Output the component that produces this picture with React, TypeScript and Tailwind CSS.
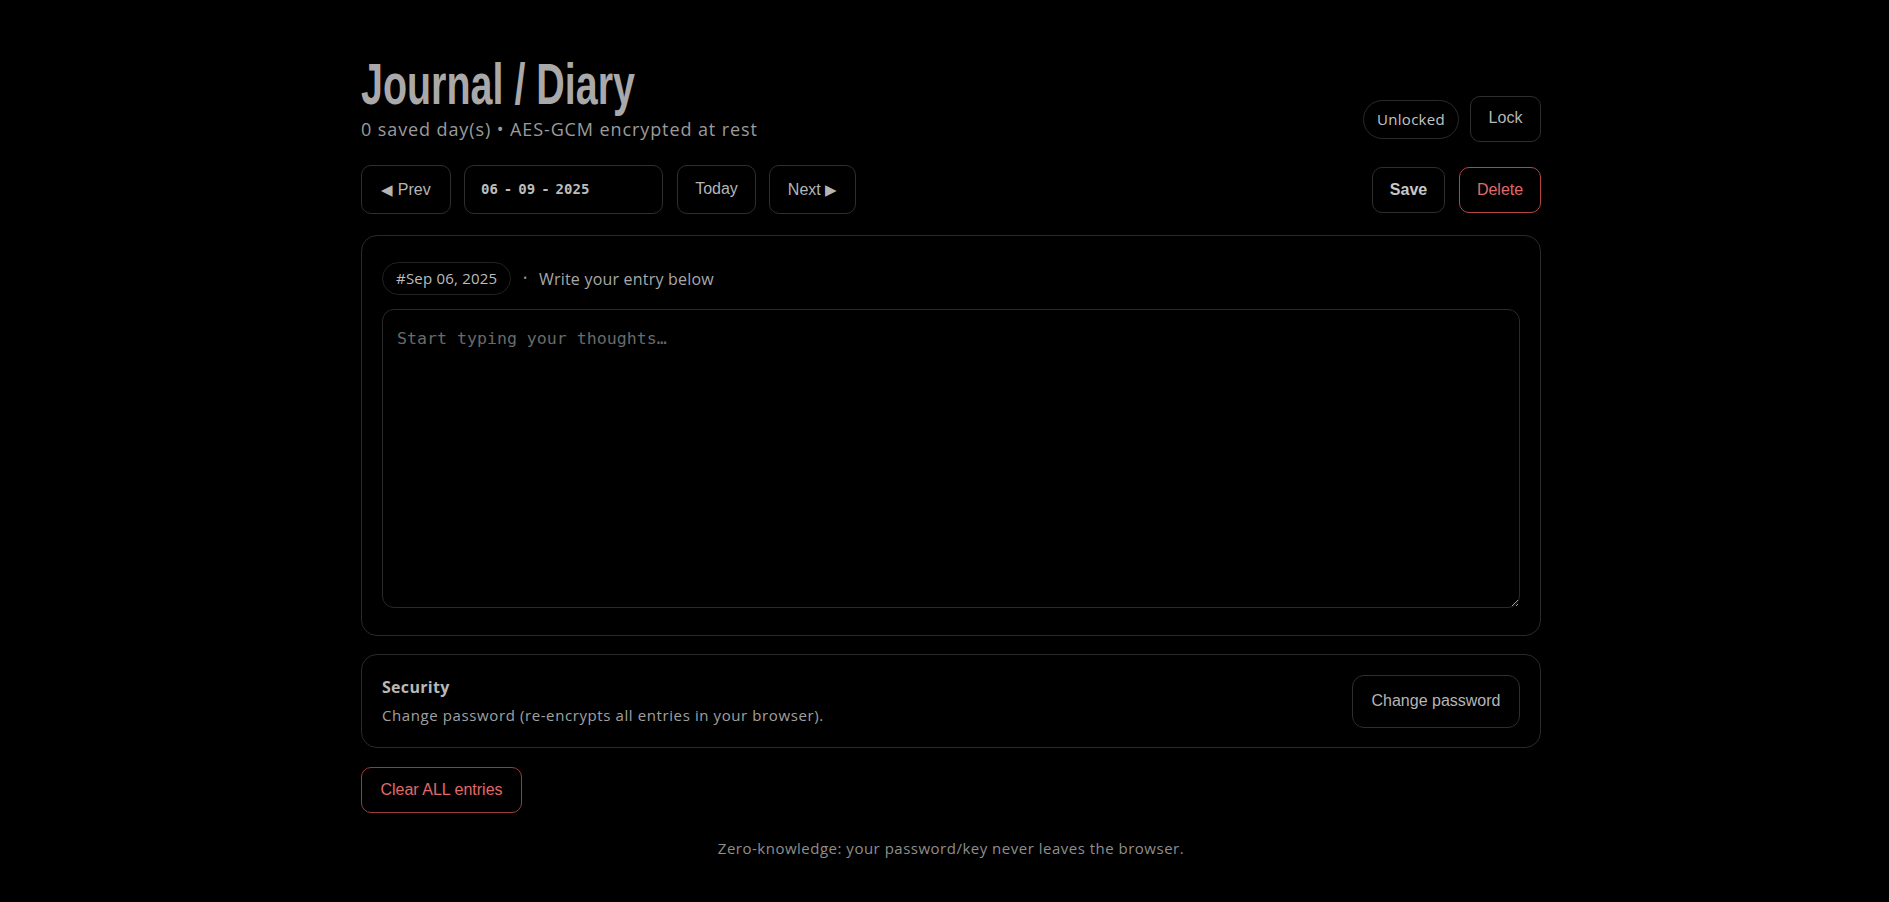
import React from "react";

const poppins = { fontFamily: '"Open Sans", "Noto Sans", sans-serif' };
const arial = { fontFamily: '"Liberation Sans", Arial, sans-serif' };

export default function App() {
  return (
    <div className="min-h-[902px] w-full bg-black text-[#aaaaaa]">
      <div className="flex justify-center pl-[13px]">
        <div className="w-[1180px] pt-[55px]">
          {/* Header */}
          <div className="flex items-end justify-between">
            <div>
              <h1
                className="inline-block origin-left scale-x-[0.68] whitespace-nowrap text-[58px] leading-[58px] font-bold text-[#a9a9a9]"
                style={arial}
              >
                Journal / Diary
              </h1>
              <p className="mt-[4px] text-[18px] leading-[24px] tracking-[0.9px] text-[#9b9b9b]" style={poppins}>
                0 saved day(s) • AES-GCM encrypted at rest
              </p>
            </div>
            <div className="flex items-center gap-[11px] mb-[-1px]" style={arial}>
              <span
                className="h-[39px] px-[13px] rounded-full border border-[#2a2a2a] flex items-center text-[15px] tracking-[0.3px] text-[#c4c4c4]"
                style={poppins}
              >
                Unlocked
              </span>
              <button className="h-[46px] w-[71px] rounded-[10px] border border-[#2e2e2e] text-[16px] text-[#b5b5b5] pb-[2px]">
                Lock
              </button>
            </div>
          </div>

          {/* Nav row */}
          <div className="mt-[24px] flex items-center justify-between" style={arial}>
            <div className="flex items-center gap-3">
              <button className="h-[49px] w-[90px] rounded-[10px] border border-[#2e2e2e] text-[16px] text-[#b5b5b5]">
                <span className="text-[15px]">◀</span> Prev
              </button>
              <div
                className="ml-[1px] h-[49px] w-[199px] rounded-[10px] border border-[#2e2e2e] flex items-center gap-[6px] pl-[16px] text-[14px] font-bold text-[#bdbdbd]"
                style={{ fontFamily: '"DejaVu Sans Mono", monospace' }}
              >
                <span>06</span>
                <span>-</span>
                <span>09</span>
                <span>-</span>
                <span>2025</span>
              </div>
              <button className="ml-[2px] h-[49px] w-[79px] rounded-[10px] border border-[#2e2e2e] text-[16px] text-[#b5b5b5] pb-[2px]">
                Today
              </button>
              <button className="ml-[1px] h-[49px] w-[87px] rounded-[10px] border border-[#2e2e2e] text-[16px] text-[#b5b5b5]">
                Next <span className="text-[15px]">▶</span>
              </button>
            </div>
            <div className="flex items-center gap-[14px]">
              <button className="h-[46px] w-[73px] rounded-[10px] border border-[#2e2e2e] text-[16px] font-bold text-[#c8c8c8]">
                Save
              </button>
              <button className="h-[46px] w-[82px] rounded-[10px] border border-[#b64646] text-[16px] text-[#e06a6a]">
                Delete
              </button>
            </div>
          </div>

          {/* Editor card */}
          <div className="mt-[21px] rounded-[16px] border border-[#2a2a2a] px-5 pt-[26px] pb-[27px]">
            <div className="flex items-center" style={poppins}>
              <span className="h-[33px] px-[13px] rounded-full border border-[#222222] flex items-center text-[15px] tracking-[0.2px] text-[#bcbcbc]">
                #Sep 06, 2025
              </span>
              <span className="ml-[12px] text-[#9a9a9a] text-[10px]">•</span>
              <span className="ml-[12px] text-[16px] tracking-[0.2px] text-[#a8a8a8]">Write your entry below</span>
            </div>
            <textarea
              className="mt-[14px] block w-full h-[299px] rounded-[12px] border border-[#2a2a2a] bg-black px-[14px] pt-[17px] text-[16.6px] leading-[24px] text-[#cccccc] placeholder:text-[#6a6a6a] outline-none"
              style={{ fontFamily: '"DejaVu Sans Mono", monospace' }}
              placeholder="Start typing your thoughts…"
            />
          </div>

          {/* Security card */}
          <div className="mt-[18px] h-[94px] rounded-[16px] border border-[#2a2a2a] px-5 flex items-center justify-between">
            <div style={poppins}>
              <div className="text-[16px] font-bold tracking-[0.3px] text-[#b8b8b8] leading-[20px]">Security</div>
              <div className="mt-[8px] text-[15px] tracking-[0.6px] text-[#a0a0a0] leading-[20px]">
                Change password (re-encrypts all entries in your browser).
              </div>
            </div>
            <button
              className="h-[53px] w-[168px] rounded-[12px] border border-[#2e2e2e] text-[16px] text-[#b5b5b5]"
              style={arial}
            >
              Change password
            </button>
          </div>

          {/* Clear all */}
          <button
            className="mt-[19px] h-[46px] w-[161px] rounded-[10px] border border-[#9a3b3b] text-[16px] text-[#e06a6a]"
            style={arial}
          >
            Clear ALL entries
          </button>

          {/* Footer */}
          <p className="mt-[24px] text-center text-[15px] tracking-[0.5px] text-[#8e8e8e]" style={poppins}>
            Zero-knowledge: your password/key never leaves the browser.
          </p>
        </div>
      </div>
    </div>
  );
}
